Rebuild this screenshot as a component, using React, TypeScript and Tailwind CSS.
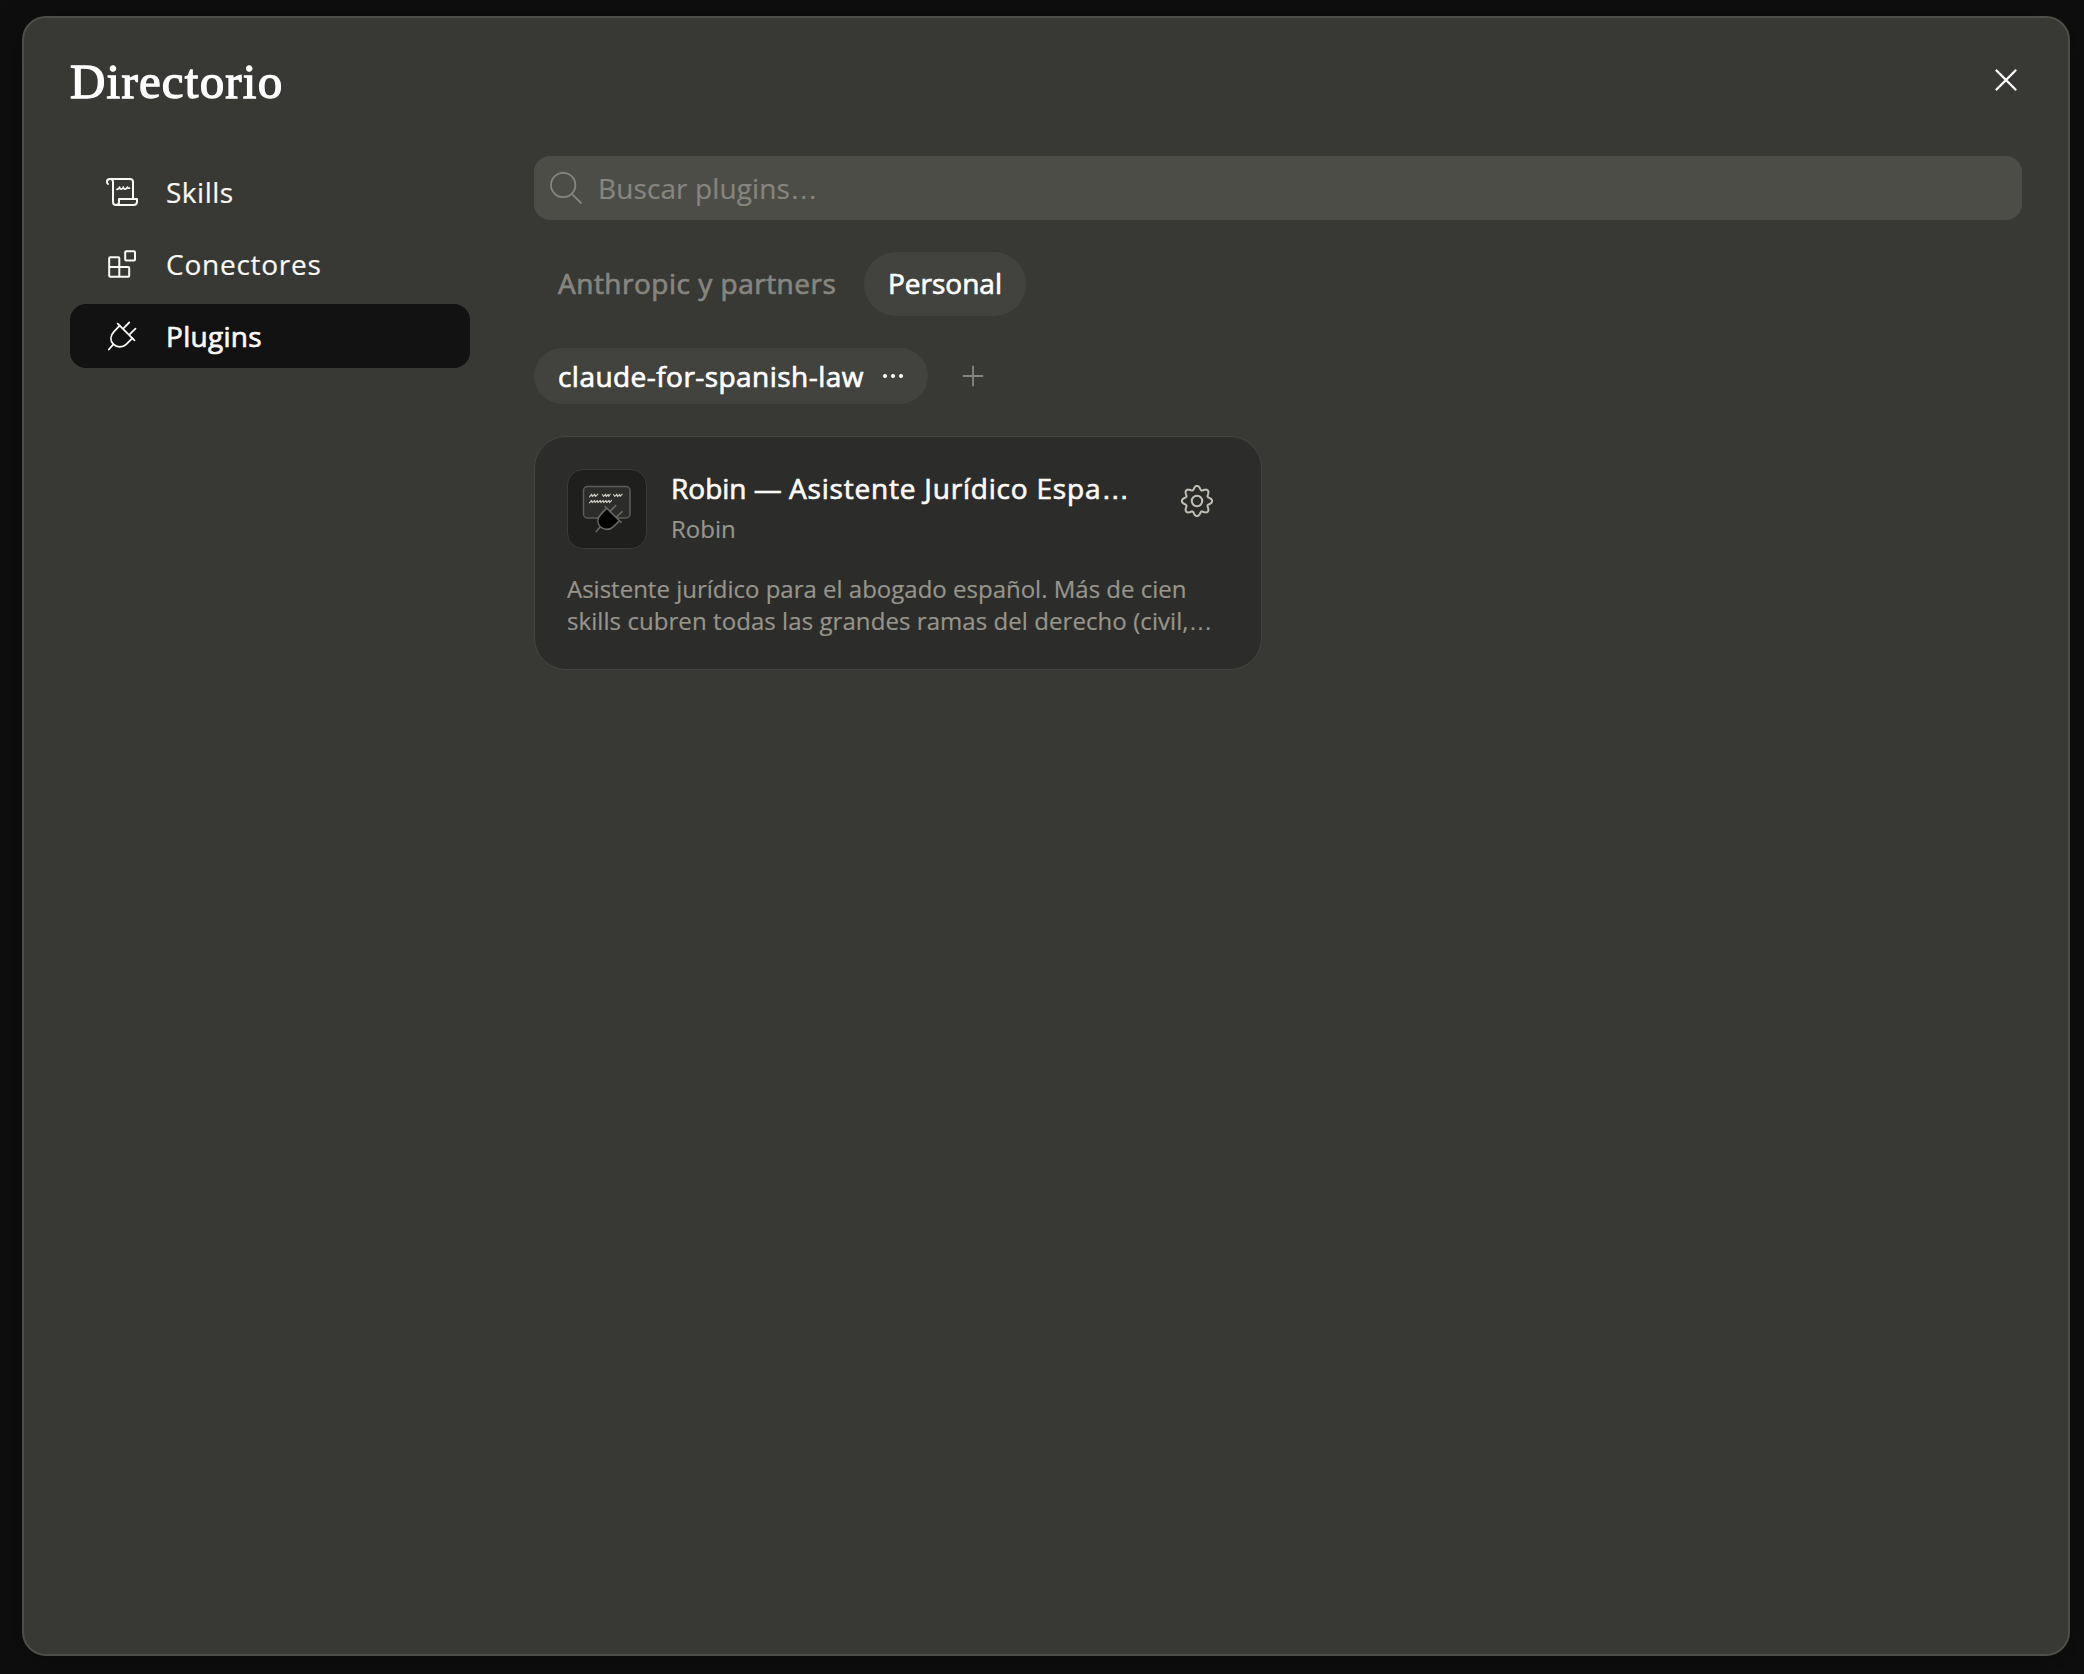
import { useState } from 'react';
import type { ReactNode } from 'react';

type Section = 'skills' | 'connectors' | 'plugins';

const PLUG_BODY = 'M13.7 5.7 8 11.6C4.2 15.6 4 20.6 7.3 24.2c3.5 3.6 9.2 3.6 12.9.1l6.2-6.1';
const PLUG_LINES = 'M11.7 3.7 28.5 20.3M23.2 2.5l-6 6.1M29.5 8.7l-6.1 6M2.8 29.5l4.5-5.2';

// Eight rounded teeth around the centre of a 32px box.
const GEAR_PATH = (() => {
  const pts: string[] = [];
  for (let i = 0; i < 160; i++) {
    const a = (i / 160) * Math.PI * 2;
    const r = 13.4 + 1.85 * Math.cos(8 * a) - 0.1 * Math.cos(16 * a);
    pts.push(`${(16 + r * Math.sin(a)).toFixed(2)} ${(16 - r * Math.cos(a)).toFixed(2)}`);
  }
  return `M${pts.join('L')}Z`;
})();

function Icon({ children, width = 1.8 }: { children: ReactNode; width?: number }) {
  return (
    <svg
      viewBox="0 0 32 32"
      className="size-8 shrink-0"
      fill="none"
      stroke="currentColor"
      strokeWidth={width}
      strokeLinecap="round"
      strokeLinejoin="round"
    >
      {children}
    </svg>
  );
}

function ScrollIcon() {
  return (
    <Icon width={2}>
      <path d="M2 8C1.2 7.4 1 6.6 1 5.7 1 4 2.3 3 3.8 3H24a3 3 0 0 1 3 3v17" />
      <path d="M4.4 3C6.2 3.2 7 4.4 7 6v20c0 2 1.2 3 3.2 3H27.4c2.2 0 3.6-1.2 3.6-3.2V23H13v3c0 2-1 3-2.8 3" />
      <path
        d="M11 13.3c1.4-.2 2.2-1.1 2.6-2.2.2 1.5.9 2.2 1.9 2 .9-.1 1.5-.9 1.8-2 .2 1.5.9 2.2 1.9 2 1-.1 1.8-.9 2.3-2 .2 1 .7 1.4 2 1"
        strokeWidth="1.7"
      />
    </Icon>
  );
}

function BlocksIcon() {
  return (
    <Icon width={2}>
      <rect x="19.2" y="3.2" width="9.8" height="9.3" rx="1" />
      <path d="M13.3 28.7V10.2a1 1 0 0 0-1-1H4.2a1 1 0 0 0-1 1v17.3a1.2 1.2 0 0 0 1.2 1.2h17.8a1 1 0 0 0 1-1V20a1 1 0 0 0-1-1H3.2" />
    </Icon>
  );
}

function PlugIcon() {
  return (
    <Icon width={1.8}>
      <path d={PLUG_BODY} />
      <path d={PLUG_LINES} />
    </Icon>
  );
}

function PluginArt() {
  return (
    <svg viewBox="0 0 80 80" className="size-20 shrink-0" fill="none" strokeLinecap="round" strokeLinejoin="round">
      <rect x="16.5" y="17.5" width="46.5" height="31.5" rx="4" fill="#2c2c2a" stroke="#5c5c58" strokeWidth="1.5" />
      <path
        d="M22.5 27.8l2.2-2.6.6 2.4 2.4-2.4.7 2.3 2.5-2.3M35.3 25.5l1.3 2 2-2.3.6 2.4 2-2.2.5 2 1.5-2.2M46.5 25.5l1.3 2 2-2.3.7 2.4 2.2-2.2.5 2 2-2.2"
        stroke="#c9c7bd"
        strokeWidth="1.1"
      />
      <path
        d="M22.5 33.8l2.1-2.5.6 2.3 2.3-2.3.6 2.3 2.3-2.3.6 2.3 2.3-2.3.6 2.3 2.3-2.3.6 2.3 2.3-2.3.6 2.3 2.3-2.3.6 2.3 2-2.3"
        stroke="#c9c7bd"
        strokeWidth="1.1"
      />
      <g transform="translate(26 33.5)" stroke="#6a6a65" strokeWidth="1.6" strokeLinecap="butt">
        <path d={PLUG_BODY} fill="#000" />
        <path d={PLUG_LINES} />
      </g>
    </svg>
  );
}

// Wide-set dots: Open Sans draws the ellipsis too tight.
function Dots() {
  return <span className="font-['Liberation_Sans',sans-serif] leading-none tracking-normal">…</span>;
}

const NAV: { id: Section; label: string; icon: () => ReactNode; track: string }[] = [
  { id: 'skills', label: 'Skills', icon: ScrollIcon, track: 'tracking-[0.5px]' },
  { id: 'connectors', label: 'Conectores', icon: BlocksIcon, track: 'tracking-[0.75px]' },
  { id: 'plugins', label: 'Plugins', icon: PlugIcon, track: 'tracking-[0.3px]' },
];

export default function App() {
  const [section, setSection] = useState<Section>('plugins');

  return (
    <div className="flex h-[1674px] w-[2084px] bg-[#0e0e0e] pt-4 pr-3.5 pb-[18px] pl-[22px] font-['Open_Sans',sans-serif] text-[28px] leading-10 text-[#faf9f5]">
      <div className="flex flex-1 flex-col rounded-3xl border-2 border-[#4e4e49] bg-[#383834] pt-9 pr-[46px] pl-[46px] shadow-[0_8px_32px_rgba(0,0,0,0.3)]">
        <header className="flex h-[102px] items-start justify-between">
          <h1 className="font-['Liberation_Serif',serif] text-[49px] leading-[56px] tracking-[1.2px] text-white [-webkit-text-stroke:1.3px_white]">
            Directorio
          </h1>
          <button aria-label="Cerrar" className="mt-2.5 text-white">
            <Icon width={2.3}>
              <path d="M6.5 6.5l19 19M25.5 6.5l-19 19" />
            </Icon>
          </button>
        </header>

        <div className="flex flex-1 gap-16">
          <nav className="flex w-[400px] shrink-0 flex-col gap-2 pt-1">
            {NAV.map(({ id, label, icon: NavIcon, track }) => (
              <button
                key={id}
                onClick={() => setSection(id)}
                className={`flex h-16 items-center gap-7 rounded-2xl pl-9 text-left ${track} ${
                  section === id
                    ? 'bg-[#121212] [-webkit-text-stroke:0.7px_currentColor]'
                    : '[-webkit-text-stroke:0.2px_currentColor]'
                }`}
              >
                <NavIcon />
                <span className="pb-px">{label}</span>
              </button>
            ))}
          </nav>

          <main className="flex flex-1 flex-col items-start">
            <div role="search" className="flex h-16 w-[1488px] items-center gap-4 rounded-2xl bg-[#4d4d48] pl-4 text-[#868580]">
              <Icon width={1.8}>
                <circle cx="13.2" cy="13" r="12.2" />
                <path d="M21.8 21.8l9.2 9.2" />
              </Icon>
              <span className="tracking-[0.1px] [-webkit-text-stroke:0.2px_currentColor]">
                Buscar plugins
                <Dots />
              </span>
            </div>

            <div className="mt-8 flex gap-1">
              <button className="h-16 w-[326px] rounded-full px-6 pb-0.5 text-left tracking-[0.5px] whitespace-nowrap text-[#868580] [-webkit-text-stroke:0.7px_currentColor]">
                Anthropic y partners
              </button>
              <button className="h-16 w-[162px] rounded-full bg-[#42423e] pb-0.5 text-white [-webkit-text-stroke:0.7px_currentColor]">
                Personal
              </button>
            </div>

            <div className="mt-8 flex items-center gap-[29px]">
              <div className="flex h-14 w-[394px] items-center justify-between rounded-full bg-[#42423e] pr-6 pl-6 text-white">
                <span className="pb-px tracking-[0.45px] whitespace-nowrap [-webkit-text-stroke:0.7px_currentColor]">
                  claude-for-spanish-law
                </span>
                <svg viewBox="0 0 22 6" className="h-1.5 w-[22px]" fill="currentColor">
                  <circle cx="3" cy="3" r="2" />
                  <circle cx="11" cy="3" r="2" />
                  <circle cx="19" cy="3" r="2" />
                </svg>
              </div>
              <button aria-label="Añadir" className="text-[#868580]">
                <Icon width={1.8}>
                  <path d="M16 6.5v19M6.5 16h19" />
                </Icon>
              </button>
            </div>

            <article className="mt-8 h-[234px] w-[728px] rounded-[32px] border border-[#454542] bg-[#2c2c2a] px-8 pt-8">
              <div className="flex h-20">
                <div className="flex size-20 shrink-0 items-center justify-center rounded-2xl border border-[#3a3a37] bg-[#1f1f1e]">
                  <PluginArt />
                </div>
                <div className="ml-6 w-[476px]">
                  <h2 className="-mt-px mb-px h-10 leading-10 tracking-[0.8px] whitespace-nowrap [-webkit-text-stroke:0.7px_currentColor]">
                    <span className="tracking-normal">Robin — </span>
                    Asistente Jurídico Espa
                    <Dots />
                  </h2>
                  <p className="text-2xl leading-10 text-[#97958c] [-webkit-text-stroke:0.2px_currentColor]">Robin</p>
                </div>
                <button aria-label="Ajustes" className="mt-4 ml-[34px] h-8 text-[#c2c0b6]">
                  <Icon width={2}>
                    <path d={GEAR_PATH} />
                    <circle cx="16" cy="16" r="5.2" />
                  </Icon>
                </button>
              </div>
              <p className="mt-6 text-2xl leading-8 whitespace-nowrap text-[#97958c] [-webkit-text-stroke:0.2px_currentColor]">
                Asistente jurídico para el abogado español. Más de cien
                <br />
                <span className="tracking-[0.07px]">
                  skills cubren todas las grandes ramas del derecho (civil,
                  <Dots />
                </span>
              </p>
            </article>
          </main>
        </div>
      </div>
    </div>
  );
}
